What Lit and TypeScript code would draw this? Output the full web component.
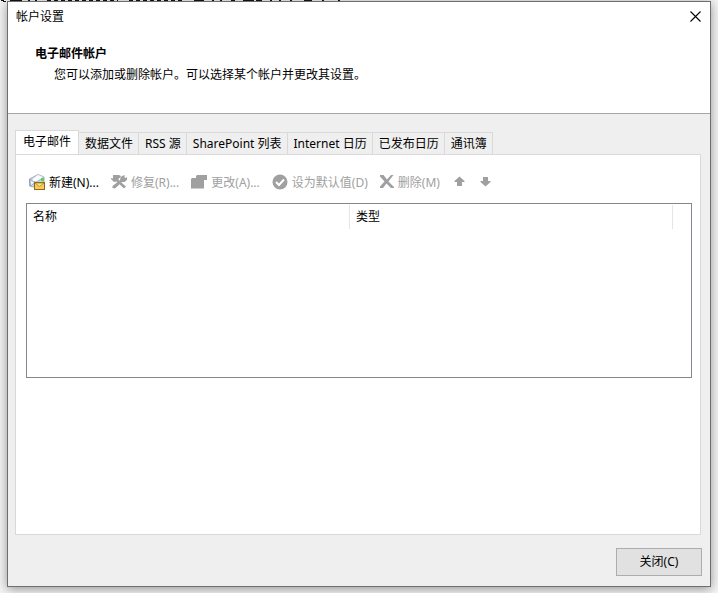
import { LitElement, html, css, svg } from "lit";
import { customElement, state } from "lit/decorators.js";
import { classMap } from "lit/directives/class-map.js";

const TABS = ["电子邮件", "数据文件", "RSS 源", "SharePoint 列表", "Internet 日历", "已发布日历", "通讯簿"];

const ICONS = {
  mail: svg`
    <path d="M.5 5 L9 .5 L15 3 V10 L7 13.5 L.5 12 Z" fill="#c9d8e6" stroke="#8a9db0" stroke-width=".8"/>
    <path d="M3 5 L9 .5 L14.5 3 L8 8 L3 7 Z" fill="#fbfdff" stroke="#b4c0cc" stroke-width=".6"/>
    <path d="M1 5.5 L6 8.5 L1.5 12 Z" fill="#eef4fa" stroke="#7f93aa" stroke-width=".7"/>
    <path d="M6 8.5 L15 4" fill="none" stroke="#9fb0c1" stroke-width=".8"/>
    <rect x="12" y="4" width="3" height="3" fill="#5fd04a"/>
    <rect x="5.5" y="8.5" width="10" height="7" fill="#f3cd55" stroke="#8a6a1c"/>
    <path d="M6 9 H15 L10.5 12.5 Z" fill="#fbe38c" stroke="#a67a1c" stroke-width=".7"/>`,
  repair: svg`
    <path d="M2 1 H8 L10 2 L9 4 L8 4 L7.500 6 L15 12.500 L13 14.500 L5.500 7.500 L3 8 L0 5 V4 L2 4.500 Z" fill="#a0a0a0"/>
    <path d="M11 2 L13.500 1 V3.500 L15 4 L16 3 V6 L13.500 8 L11 8 L4 14.500 L1.500 14 V12 L9 6 L9.500 3.500 Z" fill="#a0a0a0"/>`,
  change: svg`<path d="M0 5 L1 4 H5 V2 L6 1 H16 V6 H13 V14.500 H0 Z" fill="#a0a0a0"/>`,
  check: svg`<circle cx="8" cy="8" r="7.5" fill="#a0a0a0"/><path d="M4 8 L7 11 L12 5.5" fill="none" stroke="#fff" stroke-width="2"/>`,
  remove: svg`<path d="M1 1 H4.500 L8 5.500 L12 1 H14.500 L9.500 7.500 L15 13 V14 H12 L7.500 9.500 L4 14 H1 V12.500 L5.500 7.500 L1 2.500 Z" fill="#a0a0a0"/>`,
  up: svg`<path d="M8.500 2.500 L13.500 7 V8 H11 V12 H6 V8 H3.500 V7 Z" fill="#a0a0a0"/>`,
  down: svg`<path d="M6 3 H11 V7 H13.500 V8 L8.500 12.500 L3.500 8 V7 H6 Z" fill="#a0a0a0"/>`,
};

type IconName = keyof typeof ICONS;

const ACTIONS: { icon: IconName; label: string; name?: string; enabled?: boolean }[] = [
  { icon: "mail", label: "新建(N)...", enabled: true },
  { icon: "repair", label: "修复(R)..." },
  { icon: "change", label: "更改(A)..." },
  { icon: "check", label: "设为默认值(D)" },
  { icon: "remove", label: "删除(M)" },
  { icon: "up", label: "", name: "上移" },
  { icon: "down", label: "", name: "下移" },
];

@customElement("app-root")
export class AppRoot extends LitElement {
  @state() private active = 0;

  static styles = css`
    :host {
      display: flex;
      flex-direction: column;
      position: relative;
      box-sizing: border-box;
      min-height: 100vh;
      padding: 1px 7px 6px;
      background: #f4f4f4;
      font: 12px/16px "Noto Sans", "Noto Sans CJK SC", sans-serif;
      color: #000;
    }
    button {
      font: inherit;
      color: inherit;
      margin: 0;
      padding: 0;
      border: 0;
      background: none;
      white-space: nowrap;
    }
    .behind {
      position: absolute;
      top: 0;
      left: 0;
    }
    .dialog {
      flex: 1;
      display: flex;
      flex-direction: column;
      border: 1px solid #6e6e6e;
      background: #efefef;
      box-shadow: 0 2px 10px rgba(0, 0, 0, 0.4);
    }
    .head {
      background: #fff;
      border-bottom: 1px solid #a5a8a5;
      padding-bottom: 30px;
    }
    .titlebar {
      display: flex;
      justify-content: space-between;
      align-items: center;
      height: 29px;
      padding: 0 8px;
    }
    .titlebar h1, .head h2, .head p {
      margin: 0;
      font-size: 12px;
      font-weight: 400;
    }
    .head h2 {
      padding: 15px 27px 0;
      font-weight: 700;
    }
    .head p { padding: 5px 46px 0; }
    .close { display: flex; padding: 1px; }
    .body {
      flex: 1;
      display: flex;
      flex-direction: column;
      padding: 16px 9px 0 7px;
    }
    .tabs {
      display: flex;
      align-items: flex-end;
      height: 25px;
      margin-bottom: -1px;
    }
    .tab {
      height: 23px;
      padding: 0 5px 0 6px;
      border: solid #d9d9d9;
      border-width: 1px 1px 1px 0;
    }
    .tab.on {
      height: 25px;
      padding: 0 7px 2px;
      border-left-width: 1px;
      border-bottom-color: #fff;
      background: #fff;
    }
    .panel {
      flex: 1;
      border: 1px solid #d9d9d9;
      background: #fff;
      padding: 18px 8px 0 10px;
    }
    .tools {
      display: flex;
      gap: 12px;
      padding: 0 3px;
      margin-bottom: 10px;
    }
    .tool {
      display: flex;
      align-items: center;
      gap: 4px;
      height: 20px;
    }
    .tool svg { margin-bottom: 2px; }
    .tool:disabled { color: #a0a0a0; }
    .list {
      height: 173px;
      border: 1px solid #828790;
    }
    table {
      width: 100%;
      table-layout: fixed;
      border-collapse: separate;
      border-spacing: 0 1px;
    }
    th {
      height: 24px;
      padding: 0 6px;
      border-right: 1px solid #e5e5e5;
      box-sizing: border-box;
      text-align: left;
      font-weight: 400;
    }
    th.rest { width: 18px; padding: 0; border: 0; }
    .foot {
      display: flex;
      justify-content: flex-end;
      padding: 13px 8px 10px;
    }
    .push {
      min-width: 86px;
      height: 28px;
      border: 1px solid #adadad;
      background: #e1e1e1;
    }
  `;

  render() {
    return html`
      <section class="dialog" role="dialog" aria-labelledby="title">
        <header class="head">
          <div class="titlebar">
            <h1 id="title">帐户设置</h1>
            <button class="close" aria-label="关闭">
              <svg width="11" height="11" viewBox="0 0 11 11"><path d="M.5 .5 L10.5 10.5 M10.5 .5 L.5 10.5" stroke="#000" stroke-width="1.1" /></svg>
            </button>
          </div>
          <h2>电子邮件帐户</h2>
          <p>您可以添加或删除帐户。可以选择某个帐户并更改其设置。</p>
        </header>
        <div class="body">
          <div class="tabs" role="tablist">
            ${TABS.map(
              (t, i) => html`<button
                role="tab"
                aria-selected=${i === this.active}
                class=${classMap({ tab: true, on: i === this.active })}
                @click=${() => (this.active = i)}
              >${t}</button>`
            )}
          </div>
          <div class="panel" role="tabpanel">
            <div class="tools" role="toolbar">
              ${ACTIONS.map((a) => {
                const small = a.icon === "remove" || !a.label;
                return html`<button class="tool" ?disabled=${!a.enabled} aria-label=${a.name ?? a.label}>
                  <svg width=${small ? 14 : 16} height="16" viewBox=${small ? "1 0 14 16" : "0 0 16 16"}>${ICONS[a.icon]}</svg>
                  ${a.label ? html`<span>${a.label}</span>` : null}
                </button>`;
              })}
            </div>
            <div class="list">
              <table>
                <thead><tr><th>名称</th><th>类型</th><th class="rest"></th></tr></thead>
                <tbody></tbody>
              </table>
            </div>
          </div>
        </div>
        <footer class="foot"><button class="push">关闭(C)</button></footer>
      </section>
      <svg class="behind" width="350" height="2" aria-hidden="true">
        <path d="M1 .5 H4 M3 1.5 H6 M10 .5 H22 M28 .5 H30 M35 .5 H37 M194 .5 H204 M212 .5 H214 M220 .5 H222 M231 .5 H235 M243 .5 H254 M256 .5 H262 M270 .5 H272 M279 .5 H281 M290 .5 H292 M304 .5 H312 M322 .5 H324 M338 .5 H340" stroke="#111" />
        <path d="M47 .5 H118 M129 .5 H184" stroke="#111" stroke-dasharray="4 3" />
      </svg>
    `;
  }
}
